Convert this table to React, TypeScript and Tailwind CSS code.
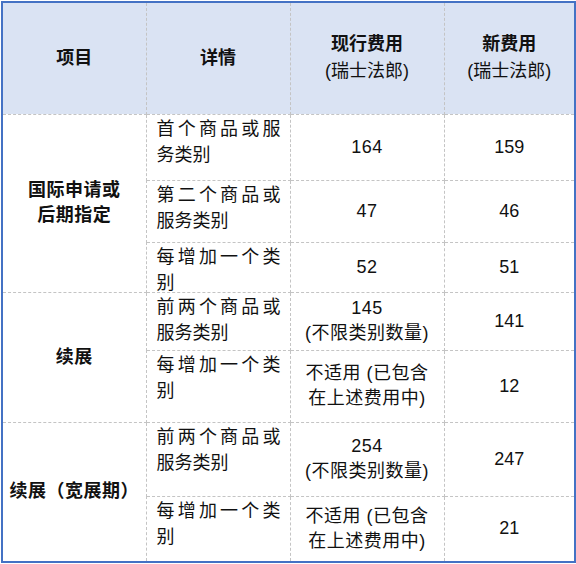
import React from 'react';

type Row = {
  group?: { label: React.ReactNode; span: number };
  detail: string;
  current: React.ReactNode;
  next: string;
  h: string;
};

const rows: Row[] = [
  {
    group: { label: <>国际申请或<br />后期指定</>, span: 3 },
    detail: '首个商品或服务类别',
    current: '164',
    next: '159',
    h: 'h-[66px]',
  },
  { detail: '第二个商品或服务类别', current: '47', next: '46', h: 'h-[62px]' },
  { detail: '每增加一个类别', current: '52', next: '51', h: 'h-[50px]' },
  {
    group: { label: '续展', span: 2 },
    detail: '前两个商品或服务类别',
    current: <>145<br />(不限类别数量)</>,
    next: '141',
    h: 'h-[58px]',
  },
  {
    detail: '每增加一个类别',
    current: <>不适用 (已包含<br />在上述费用中)</>,
    next: '12',
    h: 'h-[72px]',
  },
  {
    group: { label: '续展（宽展期）', span: 2 },
    detail: '前两个商品或服务类别',
    current: <>254<br />(不限类别数量)</>,
    next: '247',
    h: 'h-[74px]',
  },
  {
    detail: '每增加一个类别',
    current: <>不适用 (已包含<br />在上述费用中)</>,
    next: '21',
    h: 'h-[66px]',
  },
];

const cell = 'border border-dashed border-[#c4c4c4]';

export default function App() {
  return (
    <div
      className="bg-white pl-px pt-px w-[576px] h-[564px] overflow-hidden text-[18px] text-[#111]"
      style={{ fontFamily: '"Liberation Sans", "Noto Sans CJK SC", sans-serif' }}
    >
      <table className="w-[573px] table-fixed border-collapse border-2 border-solid border-[#4472c4]">
        <colgroup>
          <col className="w-[144px]" />
          <col className="w-[144px]" />
          <col className="w-[154px]" />
          <col className="w-[131px]" />
        </colgroup>
        <thead>
          <tr className="h-[112px] bg-[#dae3f3]">
            <th className={`${cell} font-bold leading-[27px]`}>项目</th>
            <th className={`${cell} font-bold leading-[27px]`}>详情</th>
            <th className={`${cell} leading-[27px]`}>
              <span className="font-bold">现行费用</span>
              <br />
              <span className="font-normal">(瑞士法郎)</span>
            </th>
            <th className={`${cell} leading-[27px]`}>
              <span className="font-bold">新费用</span>
              <br />
              <span className="font-normal">(瑞士法郎)</span>
            </th>
          </tr>
        </thead>
        <tbody>
          {rows.map((r, i) => (
            <tr key={i} className={r.h}>
              {r.group && (
                <td
                  rowSpan={r.group.span}
                  className={`${cell} text-center align-middle font-bold leading-[25px] tracking-[0.5px] px-0`}
                >
                  {r.group.label}
                </td>
              )}
              <td className={`${cell} align-top pl-[10px] pr-[9px] pt-px pb-0`}>
                <div className="leading-[26px] text-justify -mb-3">{r.detail}</div>
              </td>
              <td className={`${cell} text-center align-middle leading-[25px] tracking-[0.5px]`}>{r.current}</td>
              <td className={`${cell} text-center align-middle`}>{r.next}</td>
            </tr>
          ))}
        </tbody>
      </table>
    </div>
  );
}
